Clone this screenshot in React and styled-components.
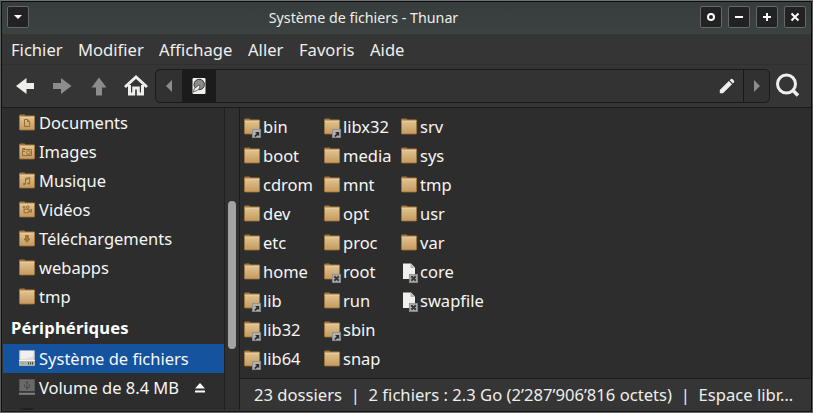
import React, { useId } from "react";
import styled, { createGlobalStyle } from "styled-components";

const GlobalStyle = createGlobalStyle`
  * { box-sizing: border-box; }
  body { margin: 0; overflow: hidden; background: #2d2d2d; }
`;

const Window = styled.div`
  width: 813px;
  height: 413px;
  display: flex;
  flex-direction: column;
  border: 1px solid;
  border-color: #6e7171 #5a5c5c #6a6a6a #5a5c5c;
  font: 16.6px/29px "Noto Sans", sans-serif;
  color: #eeeeec;
  background: #353535;
`;

const Frame = styled.div`
  flex: 1;
  min-height: 0;
  display: flex;
  flex-direction: column;
  border: 1px solid #0c0c0c;
  border-bottom-color: #141414;
`;

const TitleBar = styled.header`
  height: 32px;
  flex: none;
  display: flex;
  align-items: flex-start;
  padding: 4px 5px;
  gap: 6px;
  background: linear-gradient(#373c3c, #3c4141);
`;

const Title = styled.div`
  flex: 1;
  text-align: center;
  font-size: 14.25px;
  line-height: 23px;
  padding-right: 2px;
  white-space: pre;
`;

const WindowButton = styled.button`
  width: 22px;
  height: 22px;
  padding: 0;
  display: grid;
  place-items: center;
  border: 1px solid #666868;
  border-radius: 2px;
  background: #222222;
`;

const MenuBar = styled.nav`
  height: 31px;
  flex: none;
  display: flex;
  gap: 16px;
  padding: 1px 9px 0;
  line-height: 30px;
  border-bottom: 1px solid #303030;
`;

const MenuItem = styled.span`
  white-space: nowrap;
  width: ${(p) => p.$w}px;
`;

const Toolbar = styled.div`
  height: 43px;
  flex: none;
  display: flex;
  align-items: flex-start;
  border-bottom: 1px solid #1c1c1c;
  padding: 4px 0 0 11px;
`;

const ToolIcon = styled.svg`
  width: 24px;
  height: 24px;
  margin: 5px ${(p) => p.$gap || 0}px 0 0;
  flex: none;
  color: ${(p) => (p.$dim ? "#8c8c8c" : "#eeeeec")};
`;

const PathBar = styled.div`
  width: 615px;
  height: 34px;
  display: flex;
  border: 1px solid #1a1a1a;
  border-radius: 5px;
  overflow: hidden;
  background: #313131;
`;

const PathCell = styled.div`
  width: ${(p) => p.$w}px;
  display: grid;
  place-items: center;
  background: ${(p) => (p.$active ? "#1b1b1b" : "transparent")};
`;

const PathEntry = styled.div`
  flex: 1;
  display: flex;
  align-items: center;
  justify-content: flex-end;
  padding-right: 8px;
  background: #333333;
  border-right: 1px solid #1a1a1a;
`;

const Body = styled.div`
  flex: 1;
  min-height: 0;
  display: flex;
  background: #2d2d2d;
  border-bottom: 1px solid #353535;
`;

const Sidebar = styled.aside`
  width: 223px;
  flex: none;
  overflow: hidden;
  border-right: 1px solid #202020;
  border-left: 1px solid #353535;
`;

const Place = styled.div`
  height: 29px;
  display: flex;
  align-items: flex-start;
  padding-left: 16px;
  gap: 4px;
  font-size: 16.5px;
  white-space: nowrap;
  color: #f6f6f6;
  background: ${(p) => (p.$selected ? "#15539e" : "transparent")};
`;

const Heading = styled.div`
  height: 33px;
  padding: 2px 0 0 8px;
  font-weight: 700;
  letter-spacing: 0.16px;
  color: #ffffff;
`;

const PlaceIcon = styled.svg`
  width: 16px;
  height: 17px;
  margin-top: 6px;
  flex: none;
`;

const EjectIcon = styled.svg`
  width: 12px;
  height: 10px;
  margin: 10px 0 0 11px;
`;

const ScrollTrack = styled.div`
  width: 15px;
  flex: none;
  padding: 93px 0 0 3px;
  background: #303030;
  border-right: 1px solid #1c1c1c;
`;

const ScrollThumb = styled.div`
  width: 8px;
  height: 148px;
  border-radius: 4px;
  background: #a3a3a2;
`;

const Main = styled.main`
  flex: 1;
  min-width: 0;
  display: flex;
  flex-direction: column;
`;

const FileGrid = styled.div`
  flex: 1;
  display: grid;
  grid-auto-flow: column;
  grid-template-rows: repeat(9, 29px);
  grid-template-columns: 80px 77px 100px;
  padding: 4px 0 0 4px;
`;

const FileCell = styled.div`
  display: flex;
  gap: 1px;
  font-size: 16.5px;
  white-space: nowrap;
  color: #f6f6f6;
`;

const FileIcon = styled.svg`
  width: 18px;
  height: 21px;
  margin-top: 6px;
  flex: none;
`;

const StatusBar = styled.footer`
  height: 32px;
  flex: none;
  padding: 1px 0 0 14px;
  line-height: 29px;
  letter-spacing: 0.015px;
  white-space: pre;
  border-top: 1px solid #1c1c1c;
  background: #353535;
`;

const FolderShape = () => {
  const id = useId();
  return (
    <>
      <defs>
        <linearGradient id={id} x1="0" y1="0" x2="0" y2="1">
          <stop stopColor="#e2c492" />
          <stop offset="1" stopColor="#c49a5e" />
        </linearGradient>
      </defs>
      <path d="M0 2.500V2Q0 .4 1.500.4h3.700Q6 .4 6.400 1.400h8.100q1.500 0 1.500 1.400V4H0Z" fill="#a87736" />
      <path d="M.4 2.400h15.200V15q0 1-1 1H1.400q-1 0-1-1Z" fill={`url(#${id})`} stroke="#a27233" strokeWidth=".8" />
      <path d="M1 3h14" stroke="#efd9b2" strokeWidth=".8" />
    </>
  );
};

const emblems = {
  documents: <path d="M5.500 5.500h3.200l2 2v5h-5.200ZM8.500 5.500v2.200h2" />,
  images: <path d="M3.500 6.500h9v6h-9ZM3.500 5.500h2.500M4 8.500h2M9.500 7.600a1.900 1.900 0 1 1 0 3.800 1.900 1.900 0 0 1 0-3.800Z" />,
  music: <path d="M6.500 11.500V6.300l4.200-.8v5.500M6.500 7.500l4.200-.8M4.500 11.500h1.800v1h-1.800ZM8.800 11h1.800v1H8.800Z" />,
  videos: <path d="M5 5.200a1 1 0 1 1 0 2 1 1 0 0 1 0-2ZM8.800 4.800a1.300 1.300 0 1 1 0 2.600 1.300 1.300 0 0 1 0-2.600ZM5 8.200h5v3.500H5ZM10 10l2.500-1.700v3Z" />,
  downloads: <path d="M6.700 5.500h2.600v3.500h1.500L8 12.300 5.200 9h1.500Z" fill="#a77a3e" />,
};

const drives = {
  system: (
    <>
      <rect x=".2" y=".2" width="15.600" height="15.600" rx=".8" fill="#c9c9c7" />
      <rect x="1.500" y="1" width="13" height="9.500" fill="#dededc" />
      <path d="M1.500 1h13v5Q9 9 1.500 9Z" fill="#f0f0ee" />
      <path d="M0 10.500h16" stroke="#f4f4f2" />
      <rect x=".2" y="11" width="15.600" height="4.800" fill="#b3b3b1" />
      <rect x="2.500" y="12.500" width="2" height="1.500" fill="#7fc02f" />
      <path d="M9.500 12.200v2.300M11.500 12.200v2.300M13.500 12.200v2.300" stroke="#444" />
    </>
  ),
  usb: (
    <>
      <rect x=".3" y=".3" width="15.400" height="12" fill="#6a6a6a" />
      <path d="M0 13h16" stroke="#3a3a3a" strokeWidth="1.200" />
      <path d="M0 14.800h16" stroke="#808080" strokeWidth="2" />
      <path d="M8 2.500v8M5.500 5.500v2L8 9.300 10.700 8V5M7 4 8 2.500 9 4" fill="none" stroke="#474747" />
    </>
  ),
  dark: <path d="M1.500.3h13l.5 3H1Z" fill="#1f1f1f" />,
};

const Emblem = ({ type }) => (
  <g>
    <rect x="8.300" y="11.300" width="8.400" height="8.400" fill="#b0b0ae" stroke="#888886" strokeWidth=".7" />
    {type === "link" ? (
      <path d="M10.200 18 12.600 15.600 11 14h4.200v4.200L13.900 16.900l-2.400 2Z" fill="#2b2b2b" />
    ) : (
      <path d="m10.300 13.300 4.500 4.500m0-4.500-4.500 4.500" stroke="#3a3a3a" strokeWidth="2" />
    )}
  </g>
);

const DocumentShape = () => (
  <>
    <path d="M2 .4h8l4 4.100V16H2Z" fill="#f0f0ee" />
    <path d="M9.500.4v4.600H14Z" fill="#b5b5b2" />
  </>
);

const places = [
  ["Documents", "documents"],
  ["Images", "images"],
  ["Musique", "music"],
  ["Vidéos", "videos"],
  ["Téléchargements", "downloads"],
  ["webapps"],
  ["tmp"],
];

const files = [
  ["bin", "link"], ["boot"], ["cdrom"], ["dev"], ["etc"], ["home"], ["lib", "link"], ["lib32", "link"], ["lib64", "link"],
  ["libx32", "link"], ["media"], ["mnt"], ["opt"], ["proc"], ["root", "lock"], ["run"], ["sbin", "link"], ["snap"],
  ["srv"], ["sys"], ["tmp"], ["usr"], ["var"], ["core", "lock", true], ["swapfile", "lock", true],
];

const menus = [["Fichier", 51], ["Modifier", 65], ["Affichage", 73], ["Aller", 35], ["Favoris", 55], ["Aide", 36]];

const Glyph = ({ d, fill = "none" }) => (
  <svg width="12" height="12" viewBox="0 0 12 12">
    <path d={d} fill={fill} stroke={fill === "none" ? "#fff" : "none"} strokeWidth="2" />
  </svg>
);

export default function App() {
  return (
    <Window>
      <GlobalStyle />
      <Frame>
        <TitleBar>
          <WindowButton><Glyph fill="#fff" d="M2 4h8L6 8Z" /></WindowButton>
          <Title>Système de fichiers - Thunar</Title>
          <WindowButton><Glyph d="M6 3a3 3 0 1 1 0 6 3 3 0 0 1 0-6Z" /></WindowButton>
          <WindowButton><Glyph d="M2 6h8" /></WindowButton>
          <WindowButton><Glyph d="M2 6h8M6 2v8" /></WindowButton>
          <WindowButton><Glyph d="m2.500 2.500 7 7m0-7-7 7" /></WindowButton>
        </TitleBar>
        <MenuBar>
          {menus.map(([name, w]) => <MenuItem key={name} $w={w}>{name}</MenuItem>)}
        </MenuBar>
        <Toolbar>
          <ToolIcon viewBox="0 0 24 24" $gap={13}><path fill="currentColor" d="M3 12 13.500 4v5H21v6h-7.500v5Z" /></ToolIcon>
          <ToolIcon viewBox="0 0 24 24" $gap={13} $dim><path fill="currentColor" d="M21.500 12 11 4v5H3v6h8v5Z" /></ToolIcon>
          <ToolIcon viewBox="0 0 24 24" $gap={13} $dim><path fill="currentColor" d="m12 3.500 7.500 10H15v8H9v-8H4.500Z" /></ToolIcon>
          <ToolIcon viewBox="0 0 24 24" $gap={7}>
            <path fill="none" stroke="currentColor" strokeWidth="3" d="m1 13 11-10 11 10" />
            <path fill="none" stroke="currentColor" strokeWidth="3" d="M5.500 11v9h4.200v-6h4.600v6h4.200v-9" />
          </ToolIcon>
          <PathBar>
            <PathCell $w={26}><svg width="6" height="12"><path d="M6 0v12L0 6Z" fill="#8c8c8c" /></svg></PathCell>
            <PathCell $w={34} $active>
              <svg width="14" height="16" viewBox="0 0 14 16">
                <rect x=".5" width="13" height="16" rx="1" fill="#f0f0ee" />
                <circle cx="7.200" cy="6.500" r="5.200" fill="#8b8b8b" stroke="#333" />
                <path d="M1.500 14 2 11l5-4q1.500 1 .5 3-1 2.500-6 4Z" fill="#f0f0ee" stroke="#333" strokeWidth=".7" />
              </svg>
            </PathCell>
            <PathEntry>
              <svg width="16" height="16" viewBox="0 0 16 16">
                <path fill="#eeeeec" d="M.8 15.200V12L9.800 3l3.200 3.200-9 9ZM10.700 2.200l1-1q1-.8 2 0l1.200 1.200q.8 1 0 2l-1 1Z" />
              </svg>
            </PathEntry>
            <PathCell $w={25}><svg width="6" height="12"><path d="M0 0v12L6 6Z" fill="#8c8c8c" /></svg></PathCell>
          </PathBar>
          <svg width="36" height="34" viewBox="0 0 36 34">
            <circle cx="16.500" cy="15" r="9" fill="none" stroke="#eeeeec" strokeWidth="3" />
            <path d="m22.500 21 5.500 5.500" stroke="#eeeeec" strokeWidth="3.500" />
          </svg>
        </Toolbar>
        <Body>
          <Sidebar>
            {places.map(([name, icon]) => (
              <Place key={name}>
                <PlaceIcon viewBox="0 0 16 17">
                  <FolderShape />
                  <g fill="none" stroke="#906630" strokeWidth=".9">{emblems[icon]}</g>
                </PlaceIcon>
                {name}
              </Place>
            ))}
            <Heading>Périphériques</Heading>
            <Place $selected><PlaceIcon viewBox="0 0 16 17">{drives.system}</PlaceIcon>Système de fichiers</Place>
            <Place>
              <PlaceIcon viewBox="0 0 16 17">{drives.usb}</PlaceIcon>Volume de 8.4 MB
              <EjectIcon viewBox="0 0 12 10"><path fill="#fff" d="m6 0 5 5.500H1ZM1 7.500h10v2H1Z" /></EjectIcon>
            </Place>
            <Place><PlaceIcon viewBox="0 0 16 17">{drives.dark}</PlaceIcon></Place>
          </Sidebar>
          <ScrollTrack><ScrollThumb /></ScrollTrack>
          <Main>
            <FileGrid>
              {files.map(([name, emblem, doc]) => (
                <FileCell key={name}>
                  <FileIcon viewBox="0 0 18 21">
                    {doc ? <DocumentShape /> : <FolderShape />}
                    {emblem && <Emblem type={emblem} />}
                  </FileIcon>
                  {name}
                </FileCell>
              ))}
            </FileGrid>
            <StatusBar>23 dossiers  |  2 fichiers : 2.3 Go (2’287’906’816 octets)  |  Espace libr…</StatusBar>
          </Main>
        </Body>
      </Frame>
    </Window>
  );
}
